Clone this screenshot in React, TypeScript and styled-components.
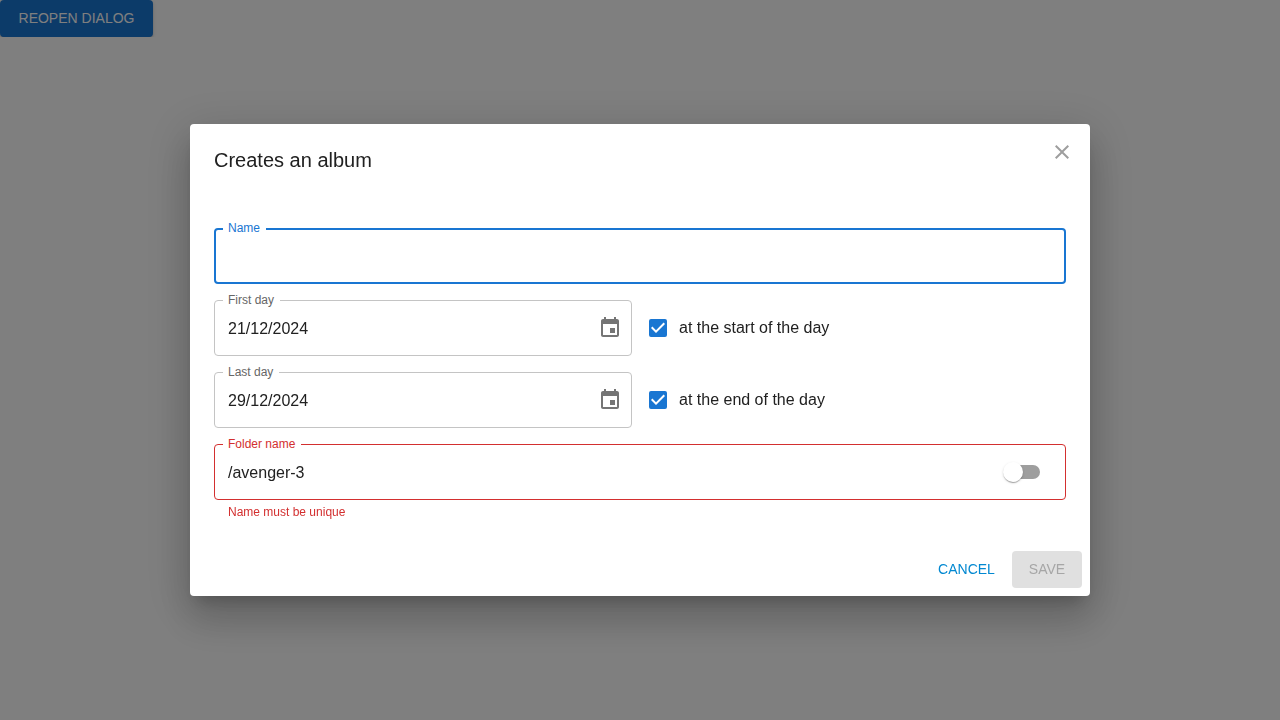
import React, { useState } from "react";
import styled, { createGlobalStyle } from "styled-components";

const PRIMARY = "#1976d2";
const ERROR = "#d32f2f";
const TEXT = "#212121";

type Tone = "normal" | "focused" | "error";

const borderColor = { normal: "#c4c4c4", focused: PRIMARY, error: ERROR };
const labelColor = { normal: "#666666", focused: PRIMARY, error: ERROR };

const GlobalStyle = createGlobalStyle`
  *, *::before, *::after { box-sizing: border-box; }
  body {
    margin: 0;
    background: #ffffff;
    color: ${TEXT};
    font-family: "Liberation Sans", Arial, sans-serif;
    font-size: 16px;
    line-height: 24px;
  }
  button, input { font: inherit; }
`;

const Button = styled.button`
  min-width: 64px;
  padding: 6px 16px;
  border: 0;
  border-radius: 4px;
  font-size: 14px;
  line-height: 25px;
  text-transform: uppercase;
  cursor: pointer;
`;

const ContainedButton = styled(Button)`
  background: ${PRIMARY};
  color: #ffffff;
  box-shadow: 0 3px 1px -2px rgba(0, 0, 0, 0.2),
    0 2px 2px 0 rgba(0, 0, 0, 0.14), 0 1px 5px 0 rgba(0, 0, 0, 0.12);

  &:disabled {
    background: #e0e0e0;
    color: #a6a6a6;
    box-shadow: none;
    cursor: default;
  }
`;

const ReopenButton = styled(ContainedButton)`
  min-width: 153px;
`;

const SaveButton = styled(ContainedButton)`
  min-width: 70px;
`;

const TextButton = styled(Button)`
  min-width: 75px;
  padding: 6px 8px;
  background: transparent;
  color: #0288d1;
`;

const Backdrop = styled.div`
  position: fixed;
  inset: 0;
  display: flex;
  align-items: center;
  justify-content: center;
  padding: 32px;
  background: rgba(0, 0, 0, 0.5);
`;

const Dialog = styled.form`
  width: 100%;
  max-width: 900px;
  max-height: 100%;
  overflow-y: auto;
  border-radius: 4px;
  background: #ffffff;
  box-shadow: 0 11px 15px -7px rgba(0, 0, 0, 0.2),
    0 24px 38px 3px rgba(0, 0, 0, 0.14), 0 9px 46px 8px rgba(0, 0, 0, 0.12);
`;

const DialogHeader = styled.header`
  display: flex;
  align-items: flex-start;
  justify-content: space-between;
  padding: 8px 8px 0 24px;
`;

const Title = styled.h2`
  margin: 0;
  padding: 12px 0;
  font-size: 20px;
  font-weight: 400;
  line-height: 32px;
`;

const IconButton = styled.button`
  display: flex;
  padding: 8px;
  border: 0;
  border-radius: 50%;
  background: transparent;
  color: ${(p) => p.color};
  cursor: pointer;
`;

const Icon = styled.svg`
  display: block;
  flex: none;
  width: 24px;
  height: 24px;
  fill: currentColor;
`;

const Content = styled.div`
  display: grid;
  gap: 16px;
  padding: 40px 24px 22px;
`;

const DateRow = styled.div`
  display: grid;
  grid-template-columns: 1fr 1fr;
  align-items: center;
  gap: 16px;
`;

const FieldRoot = styled.div`
  position: relative;
`;

const FieldLabel = styled.label<{ $tone: Tone }>`
  position: absolute;
  top: -8px;
  left: 9px;
  padding: 0 6px 0 5px;
  background: #ffffff;
  color: ${(p) => labelColor[p.$tone]};
  font-size: 12px;
  line-height: 16px;
`;

const FieldBox = styled.div<{ $tone: Tone }>`
  display: flex;
  align-items: center;
  height: 56px;
  padding-right: 1px;
  border: ${(p) => (p.$tone === "focused" ? 2 : 1)}px solid
    ${(p) => borderColor[p.$tone]};
  border-radius: 4px;
`;

const FieldInput = styled.input`
  flex: 1;
  min-width: 0;
  padding: 2px 13px 0;
  border: 0;
  outline: 0;
  background: transparent;
  color: ${TEXT};
  line-height: 24px;
`;

const HelperText = styled.p`
  margin: 3px 14px 0;
  color: ${ERROR};
  font-size: 12px;
  line-height: 18px;
`;

const CheckLabel = styled.label`
  display: flex;
  align-items: center;
  gap: 12px;
  cursor: pointer;
`;

const CheckMark = styled.span`
  display: grid;
  margin-left: 1px;
  border-radius: 2px;
`;

const CheckInput = styled.input`
  grid-area: 1 / 1;
  width: 18px;
  height: 18px;
  margin: 0;
  appearance: none;
  border: 2px solid #666666;
  border-radius: 2px;
  cursor: pointer;

  &:checked {
    border-color: ${PRIMARY};
    background: ${PRIMARY};
  }
`;

const Tick = styled.svg`
  grid-area: 1 / 1;
  width: 18px;
  height: 18px;
  fill: #ffffff;
  pointer-events: none;
`;

const Switch = styled.input`
  position: relative;
  flex: none;
  width: 34px;
  height: 14px;
  margin: 0 24px 0 12px;
  appearance: none;
  border-radius: 7px;
  background: #9e9e9e;
  cursor: pointer;

  &::before {
    content: "";
    position: absolute;
    top: -3px;
    left: -3px;
    width: 20px;
    height: 20px;
    border-radius: 50%;
    background: #ffffff;
    box-shadow: 0 2px 1px -1px rgba(0, 0, 0, 0.2),
      0 1px 1px 0 rgba(0, 0, 0, 0.14), 0 1px 3px 0 rgba(0, 0, 0, 0.12);
  }

  &:checked {
    background: #8cbae8;
  }

  &:checked::before {
    left: 17px;
    background: ${PRIMARY};
  }
`;

const Actions = styled.footer`
  display: flex;
  justify-content: flex-end;
  gap: 8px;
  padding: 8px;
`;

interface FieldProps {
  id: string;
  label: string;
  value: string;
  onChange: (value: string) => void;
  tone?: Tone;
  helper?: string;
  children?: React.ReactNode;
}

function Field({ id, label, value, onChange, tone = "normal", helper, children }: FieldProps) {
  return (
    <FieldRoot>
      <FieldBox $tone={tone}>
        <FieldInput
          id={id}
          type="text"
          value={value}
          aria-invalid={tone === "error"}
          aria-describedby={helper ? `${id}-helper` : undefined}
          onChange={(e) => onChange(e.target.value)}
        />
        {children}
      </FieldBox>
      <FieldLabel htmlFor={id} $tone={tone}>
        {label}
      </FieldLabel>
      {helper && <HelperText id={`${id}-helper`}>{helper}</HelperText>}
    </FieldRoot>
  );
}

function DayField({ id, label, initial, option }: { id: string; label: string; initial: string; option: string }) {
  const [value, setValue] = useState(initial);
  return (
    <DateRow>
      <Field id={id} label={label} value={value} onChange={setValue}>
        <IconButton type="button" color="#757575" aria-label={`Choose ${label.toLowerCase()}`}>
          <Icon viewBox="0 0 24 24" aria-hidden="true">
            <path d="M17 12h-5v5h5v-5zM16 1v2H8V1H6v2H5c-1.11 0-1.99.9-1.99 2L3 19c0 1.1.89 2 2 2h14c1.1 0 2-.9 2-2V5c0-1.1-.9-2-2-2h-1V1h-2zm3 18H5V8h14v11z" />
          </Icon>
        </IconButton>
      </Field>
      <CheckLabel>
        <CheckMark>
          <CheckInput type="checkbox" defaultChecked />
          <Tick viewBox="3 3 18 18" aria-hidden="true">
            <path d="M10 17l-5-5 1.41-1.41L10 14.17l7.59-7.59L19 8l-9 9z" />
          </Tick>
        </CheckMark>
        {option}
      </CheckLabel>
    </DateRow>
  );
}

export default function App() {
  const [open, setOpen] = useState(true);
  const [name, setName] = useState("");
  const [folder, setFolder] = useState("/avenger-3");

  return (
    <>
      <GlobalStyle />
      <ReopenButton type="button" onClick={() => setOpen(true)}>
        Reopen dialog
      </ReopenButton>
      {open && (
        <Backdrop>
          <Dialog
            role="dialog"
            aria-modal="true"
            aria-labelledby="dialog-title"
            onSubmit={(e) => e.preventDefault()}
          >
            <DialogHeader>
              <Title id="dialog-title">Creates an album</Title>
              <IconButton type="button" color="#9e9e9e" aria-label="Close" onClick={() => setOpen(false)}>
                <Icon viewBox="0 0 24 24" aria-hidden="true">
                  <path d="M19 6.41L17.59 5 12 10.59 6.41 5 5 6.41 10.59 12 5 17.59 6.41 19 12 13.41 17.59 19 19 17.59 13.41 12z" />
                </Icon>
              </IconButton>
            </DialogHeader>
            <Content>
              <Field id="name" label="Name" tone="focused" value={name} onChange={setName} />
              <DayField id="first-day" label="First day" initial="21/12/2024" option="at the start of the day" />
              <DayField id="last-day" label="Last day" initial="29/12/2024" option="at the end of the day" />
              <Field
                id="folder"
                label="Folder name"
                tone="error"
                helper="Name must be unique"
                value={folder}
                onChange={setFolder}
              >
                <Switch type="checkbox" role="switch" aria-label="Use a custom folder name" />
              </Field>
            </Content>
            <Actions>
              <TextButton type="button" onClick={() => setOpen(false)}>
                Cancel
              </TextButton>
              <SaveButton type="submit" disabled>
                Save
              </SaveButton>
            </Actions>
          </Dialog>
        </Backdrop>
      )}
    </>
  );
}
